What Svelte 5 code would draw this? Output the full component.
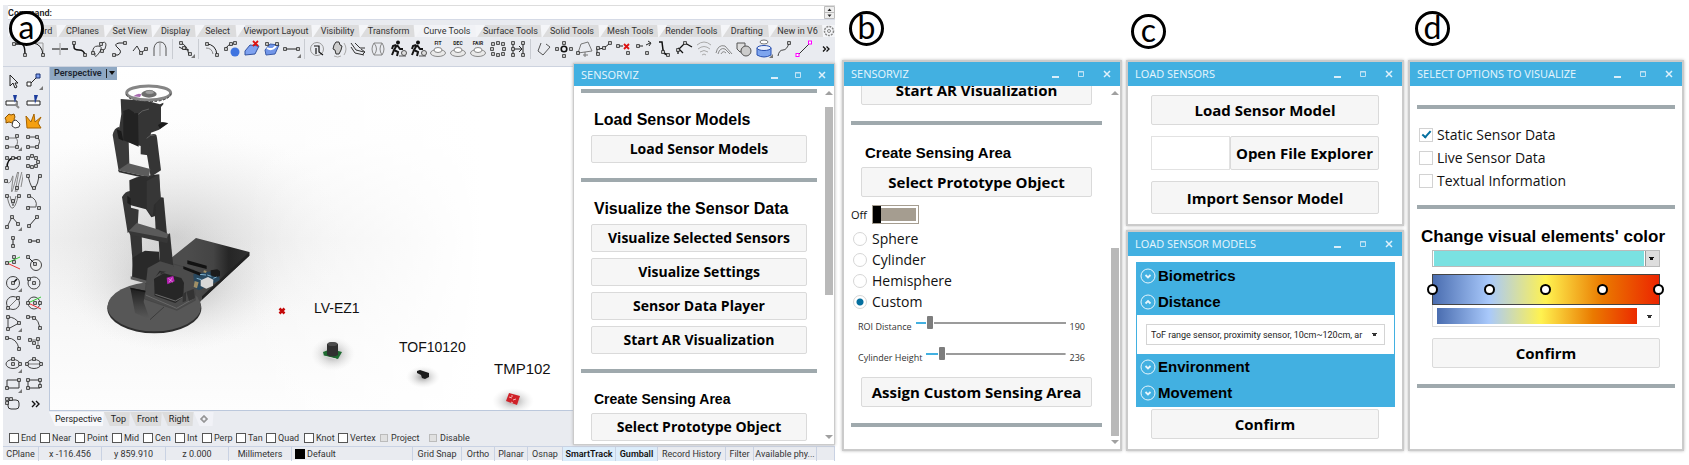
<script lang="ts">
  const sq = (x: number, y: number) =>
    `<rect x="${x - 1.3}" y="${y - 1.3}" width="2.6" height="2.6" fill="#fff" stroke="#222" stroke-width=".9"/>`;
  const ln = (d: string, c = '#222', w = 1) =>
    `<path d="${d}" fill="none" stroke="${c}" stroke-width="${w}"/>`;
  const fl = (d: string, c: string, s = 'none') => `<path d="${d}" fill="${c}" stroke="${s}"/>`;
  const corner = fl('M19 15v4h-4z', '#777');
  const rings = (t: string) =>
    `<text x="10" y="6" font-family="Roboto, sans-serif" font-size="5" font-weight="700" text-anchor="middle" fill="#222">${t}</text>` +
    '<ellipse cx="10" cy="14" rx="7.500" ry="3.500" fill="#e8e8e8" stroke="#888"/><ellipse cx="10" cy="11" rx="4" ry="2.500" fill="#fff" stroke="#888"/>';
  const runner =
    '<circle cx="10" cy="3.500" r="2" fill="#111"/>' +
    ln('M9 6l-3 5 4 2-1 4M6 11l-2 5M9 6l3 4 3 0M8 6L5 7 4 10', '#151515', 2) +
    '<circle cx="16" cy="14" r="2.500" fill="#ddd" stroke="#555"/>' + ln('M11 17h7', '#555');

  const tabs: [string, number][] = [
    ['Standard', 49], ['CPlanes', 47], ['Set View', 47], ['Display', 43], ['Select', 40],
    ['Viewport Layout', 77], ['Visibility', 47], ['Transform', 55], ['Curve Tools', 62],
    ['Surface Tools', 66], ['Solid Tools', 58], ['Mesh Tools', 59], ['Render Tools', 64],
    ['Drafting', 47], ['New in V6', 54]
  ];

  const toolGroups: string[][] = [
    [
      ln('M3 5h8q4 0 4 10', '#111', 1.5) + sq(4, 5) + sq(15, 16),
      ln('M3 4h10v12', '#999') + ln('M3 4q9 1 10 12', '#222') + sq(13, 16),
      ln('M2 10h8', '#111') + ln('M10 4v12', '#999') + ln('M11 10h7', '#111', 1.4),
      ln('M4 4v4q0 3 5 3t6 5', '#111', 1.5) + sq(4, 4) + sq(15, 16),
      ln('M3 14q-1-7 5-7t1 7-4 0M10 5q6-4 6 1t-4 6', '#444') + sq(3, 14) + sq(11, 5) + sq(12, 12),
      ln('M16 4H9q-6 1-1 5t0 7H3', '#222') + sq(15, 4) + sq(4, 16),
      ln('M3 12l4-5 4 7 5-4', '#333') + sq(11, 14) + sq(16, 10),
      ln('M4 17V9q1-6 6-6t6 6v8', '#555') + ln('M10 3v14', '#999')
    ],
    [ln('M4 4q7 1 9 12M3 8q4 3 10 3', '#222') + sq(5, 4) + sq(8, 9) + sq(14, 15) + corner],
    [
      ln('M4 5q10 0 11 11', '#222') + ln('M4 9q6 0 7 6', '#888') + sq(5, 5) + sq(15, 16),
      '<circle cx="13" cy="13" r="4.500" fill="#3f74e0"/>' + ln('M3 10q3-5 8-5', '#222') + sq(4, 10) + sq(9, 5) + sq(13, 4),
      fl('M3 12l5-6 9 1-4 8-10 1z', '#7fa2f0', '#33539f') + ln('M11 2l5 5M16 2l-5 5', '#d11', 1.8),
      fl('M3 11l5-6 9 1-4 9-9 1z', '#7296e8', '#3a5ba8') + ln('M5 9q5 3 9-2', '#fff', 2) + sq(5, 5) + sq(15, 5),
      ln('M3 10h14', '#222') + sq(3, 10) + sq(16, 10) + corner
    ],
    [
      '<circle cx="9" cy="10" r="6.500" fill="none" stroke="#999"/>' + ln('M6 7h5v6l4 3M8 9v6', '#111', 1.2),
      fl('M8 3h3l1 3 2 1-1 4-2 4H8l-1-4-2-1 1-4z', '#ccc', '#333') + ln('M16 4q4 6 0 12M6 17q4 2 7 0', '#aaa'),
      ln('M3 4l5 7 8 2M3 8l4 6 9 2M7 4l5 5 5 0M13 10l4 3-3 3', '#333'),
      ln('M6 4q-4 6 0 12 5-6 0-12M14 4q-4 6 0 12 4-6 0-12M6 4h8M6 16h8', '#888'),
      runner,
      runner,
      rings('FIT'),
      rings('DEC'),
      rings('FAIR'),
      sq(5, 5) + sq(10, 4) + sq(15, 5) + sq(4, 10) + sq(16, 10) + sq(5, 15) + sq(10, 16) + sq(15, 15),
      ln('M5 4v12M15 4v12M6 10h8M11 7l3 3-3 3', '#222') + sq(5, 4) + sq(5, 10) + sq(5, 16) + sq(15, 4) + sq(15, 16)
    ],
    [
      ln('M7 4l-3 8 5 4 7-8-4-3', '#555'),
      '<circle cx="10" cy="10" r="2.800" fill="none" stroke="#111" stroke-width="1.600"/>' + sq(3, 10) + sq(17, 10) + sq(10, 4) + sq(10, 17),
      ln('M7 5l7-2 4 9-14 2zM11 13v5M9 16h5', '#777') + sq(4, 14),
      ln('M3 15V9q5 3 13-5', '#222') + sq(4, 9) + sq(10, 9) + sq(4, 15) + sq(16, 4),
      ln('M4 7h5', '#222') + sq(4, 7) + sq(14, 14) + ln('M10 5l5 5M15 5l-5 5', '#d11', 1.8),
      ln('M4 7h5M12 6l4-2M14 2l3 2-2 3', '#222') + sq(4, 7) + sq(13, 14),
      ln('M5 3l3 0 1 8q1 5 6 5', '#111', 1.5) + sq(9, 13) + sq(14, 16),
      ln('M4 15V11L11 4l7 4M4 9l5 5', '#111', 1.3) + sq(4, 11) + sq(11, 4),
      ln('M3 6q7-6 14 0M4 10q6-5 12 0M6 13q4-3 8 0M8 16q2-2 4 0', '#aaa'),
      ln('M2 14q2-9 9-7l7 8M4 15q2-7 7-5l5 5M7 15q2-4 5-1', '#888'),
      fl('M3 4h8v4h-1a5 5 0 0 0-3 5H6L3 10z', '#ddd', '#555') + '<circle cx="12" cy="12" r="5" fill="#ccc" stroke="#555"/>',
      '<ellipse cx="10" cy="3" rx="4" ry="2" fill="#fff" stroke="#777"/><path d="M3 9v7q7 4 14 0V9z" fill="#7ea5ee" stroke="#2850b0"/><ellipse cx="10" cy="9" rx="7" ry="2.500" fill="#e8eefc" stroke="#2850b0"/>' + corner,
      ln('M4 17q1-6 5-6t6-7', '#444') + sq(15, 4),
      ln('M4 16L16 4', '#333') + '<rect x="2" y="14.500" width="3" height="3" fill="#fff" stroke="#f0f"/><rect x="14.500" y="2" width="3" height="3" fill="#fff" stroke="#f0f"/>'
    ]
  ];

  const sideTools: string[] = [
    ln('M7 4v11l3-3 2 5 2-1-2-4h3z', '#222'),
    ln('M7 12l6-6', '#222') + fl('M3 11h4v4H3z', '#fff', '#222') + fl('M12 3h4v4h-4z', '#7f9ff0', '#1b3070') + corner,
    fl('M3 10h11v4H3z', '#fff', '#222') + fl('M10 4h4l-2 8z', '#1c3c9c') + ln('M12 13l4 4', '#888', 2),
    fl('M3 10h13v4H3z', '#fff', '#222') + fl('M10 4h4l-3 9z', '#1c3c9c'),
    fl('M3 6l3-3 2 1 3-1 1 3-1 2 1 2-3 2-3-1-3 1 0-3-1-2z', '#f5a623', '#8a5200') + fl('M10 10l3-1 2 2 2 2-1 3-4 1-3-2z', '#fff', '#444'),
    fl('M3 17L2 5l5 6 3-8 1 8 6-5-3 6 3 5z', '#f5a010', '#a86400'),
    ln('M4 6h9q3 3 0 9H4', '#777') + sq(4, 6) + sq(14, 4) + sq(4, 15) + sq(14, 15) + corner,
    ln('M4 5h9q5 4 0 10H4', '#444') + sq(4, 5) + sq(13, 5) + sq(4, 15) + sq(13, 15),
    ln('M4 16q0-9 6-10h6', '#111', 1.5) + sq(4, 6) + sq(10, 6) + sq(16, 6) + sq(4, 16),
    sq(4, 6) + sq(8, 4) + sq(12, 6) + sq(14, 10) + sq(12, 14) + sq(8, 15) + sq(4, 14),
    ln('M4 10q3 3 5-4t0 8 4-8 0 9 4-8 1 8', '#888') + sq(3, 9) + sq(14, 16),
    ln('M4 4q4 16 7 12t4-12', '#444') + sq(4, 4) + sq(16, 4) + sq(10, 16),
    ln('M4 4q3 14 6 12t5-12M7 4q2 8 3 10 1-3 3-10', '#777') + sq(4, 4) + sq(16, 4) + sq(10, 9),
    ln('M5 4q9 3 7 11H4', '#555') + sq(5, 4) + sq(4, 16) + sq(15, 16),
    ln('M4 15l5-10 7 8', '#444') + sq(4, 15) + sq(9, 5) + sq(15, 12) + corner,
    ln('M5 14l7-8', '#333') + sq(5, 14) + sq(13, 5),
    ln('M10 6v8', '#222') + sq(10, 6) + sq(10, 14),
    ln('M6 9h8', '#222') + sq(6, 9) + sq(14, 9),
    ln('M4 10l13-6', '#3c3') + ln('M4 10l13 6', '#e33') + sq(4, 10) + sq(11, 9) + sq(11, 4),
    '<circle cx="12" cy="12" r="5.500" fill="#eee" stroke="#444"/>' + ln('M4 4l7 7') + sq(4, 4) + sq(11, 11),
    '<circle cx="10" cy="10" r="6.500" fill="none" stroke="#444"/>' + ln('M10 10l4-4', '#111', 1.6) + sq(10, 10) + corner,
    '<circle cx="10" cy="10" r="6" fill="none" stroke="#444"/>' + sq(10, 10) + sq(5, 6),
    '<circle cx="10" cy="10" r="6.500" fill="none" stroke="#444"/>' + ln('M5 15l10-10', '#777') + sq(5, 15) + sq(15, 5),
    '<circle cx="10" cy="10" r="6" fill="none" stroke="#444"/>' + ln('M4 10l13-6', '#3c3') + ln('M4 10l13 6', '#e33') + sq(4, 10) + sq(11, 10) + sq(16, 10),
    ln('M5 4v12l11-6q-4-6-11-6', '#444') + sq(5, 4) + sq(5, 16) + sq(16, 10) + corner,
    ln('M4 4h6q5 4 6 11', '#444') + sq(4, 4) + sq(10, 5) + sq(16, 15),
    ln('M4 5q10 0 12 11', '#444') + sq(4, 5) + sq(16, 5) + sq(16, 16),
    ln('M6 7h8v8', '#777') + sq(6, 7) + sq(10, 10) + sq(14, 6) + sq(14, 14),
    '<ellipse cx="10" cy="10" rx="7" ry="4.500" fill="none" stroke="#444"/>' + sq(10, 10) + sq(17, 10) + sq(10, 5) + corner,
    '<ellipse cx="10" cy="10" rx="7" ry="4.500" fill="none" stroke="#444"/>' + ln('M3 10h14', '#777') + sq(3, 10) + sq(17, 10) + sq(10, 5),
    ln('M4 6h12v8H4z', '#333') + sq(4, 14) + sq(16, 6) + corner,
    ln('M4 6h12v8H4z', '#333') + sq(4, 6) + sq(4, 14) + sq(16, 6) + sq(16, 12),
    '<rect x="5" y="6" width="11" height="9" rx="3" fill="none" stroke="#333"/>' + sq(4, 5) + sq(8, 5) + sq(4, 9),
    ln('M8 7l3 3-3 3M12 7l3 3-3 3', '#111', 1.4)
  ];

  const viewTabs = ['Perspective', 'Top', 'Front', 'Right'];
  const snaps = ['End', 'Near', 'Point', 'Mid', 'Cen', 'Int', 'Perp', 'Tan', 'Quad', 'Knot', 'Vertex', 'Project', 'Disable'];
  const status = ['CPlane', 'x -116.456', 'y 859.910', 'z 0.000', 'Millimeters', 'Default', 'Grid Snap', 'Ortho', 'Planar', 'Osnap', 'SmartTrack', 'Gumball', 'Record History', 'Filter', 'Available phy...', ''];

  const shapes = ['Sphere', 'Cylinder', 'Hemisphere', 'Custom'];
  let shape = $state('Custom');
  let sliders = $state([
    { id: 'roi', label: 'ROI Distance', value: 190, max: 2400 },
    { id: 'height', label: 'Cylinder Height', value: 236, max: 2400 }
  ]);
  let options = $state([
    { label: 'Static Sensor Data', on: true },
    { label: 'Live Sensor Data', on: false },
    { label: 'Textual Information', on: false }
  ]);
  const stops = [0, 25, 50, 75, 100];
</script>

{#snippet titlebar(title: string)}
  <header class="titlebar">
    <h2>{title}</h2>
    <button aria-label="Minimize"><svg width="10" height="10"><path d="M2 8h7" stroke="#d9eefa" stroke-width="2" /></svg></button>
    <button aria-label="Maximize"><svg width="10" height="10"><path d="M2.500 2.500h5v5h-5zM2 3h6" fill="none" stroke="#bfe2f5" /></svg></button>
    <button aria-label="Close"><svg width="10" height="10"><path d="M2 2l6 6M8 2L2 8" stroke="#dff1fb" stroke-width="1.500" /></svg></button>
  </header>
{/snippet}

{#snippet scroller()}
  <div class="scroller">
    <svg width="8" height="5"><path d="M0 5l4-4 4 4z" fill="#a0a0a0" /></svg>
    <div class="rail"><span></span></div>
    <svg width="8" height="5"><path d="M0 0l4 4 4-4z" fill="#a0a0a0" /></svg>
  </div>
{/snippet}

{#snippet chevron(up: boolean)}
  <svg width="16" height="16" viewBox="0 0 16 16" fill="none" stroke="#e6f5fc">
    <circle cx="8" cy="8" r="7" />
    <path d={up ? 'M5.500 9.500L8 7l2.500 2.500' : 'M5.500 7L8 9.500 10.500 7'} stroke-width="1.800" />
  </svg>
{/snippet}

<main>
  <section class="rhino">
    <span class="badge over">a</span>
    <div class="command">
      <label for="cmd">Command:</label><input id="cmd" />
      <svg width="11" height="13"><path d="M.5.500h10v12H.5zM0 6.500h11" fill="#eee" stroke="#bbb" /><path d="M3.500 5l2-2.500 2 2.500zM3.500 8.500l2 2.500 2-2.500z" fill="#222" /></svg>
    </div>
    <nav class="tabs">
      {#each tabs as [name, w]}
        <button class:active={name === 'Curve Tools'} style:flex-grow={w}>{name}</button>
      {/each}
      <svg width="12" height="12" fill="none" stroke="#888"><circle cx="6" cy="6" r="4.500" stroke-dasharray="2 1" stroke-width="1.500" /><circle cx="6" cy="6" r="1.500" /></svg>
    </nav>
    <div class="toolbar">
      {#each toolGroups as group}
        <div class="group">
          {#each group as icon}<svg width="20" height="20" viewBox="0 0 20 20">{@html icon}</svg>{/each}
        </div>
      {/each}
      <svg class="more" width="10" height="8" fill="none" stroke="#111" stroke-width="1.300"><path d="M1 1.500l2.500 2.500-2.500 2.500M4.500 1.500l2.500 2.500-2.500 2.500" /></svg>
    </div>
    <div class="work">
      <div class="side">
        {#each sideTools as icon}<svg width="20" height="20" viewBox="0 0 20 20">{@html icon}</svg>{/each}
      </div>
      <div class="viewport">
        <button class="viewname"><span>Perspective</span><svg width="6" height="5"><path d="M0 0h6L3 4z" fill="#111" /></svg></button>
        <svg class="scene" viewBox="50 66 785 344" preserveAspectRatio="xMinYMin slice">
          <defs>
            <linearGradient id="sky" x1="0" y1="0" x2="0" y2="1">
              <stop offset="0" stop-color="#fff" /><stop offset=".22" stop-color="#fdfdfd" />
              <stop offset=".5" stop-color="#f1f1f1" /><stop offset=".8" stop-color="#f9f9f9" /><stop offset="1" stop-color="#fdfdfd" />
            </linearGradient>
            <linearGradient id="fade" x1="0" x2="1"><stop offset=".25" stop-color="#fff" stop-opacity="0" /><stop offset=".55" stop-color="#fff" /></linearGradient>
            <radialGradient id="shade"><stop offset="0" stop-color="#777" stop-opacity=".75" /><stop offset=".5" stop-color="#aaa" stop-opacity=".35" /><stop offset="1" stop-color="#ddd" stop-opacity="0" /></radialGradient>
            <linearGradient id="plate" x1="0" x2="1"><stop offset=".4" stop-color="#4c4c4c" /><stop offset=".65" stop-color="#444" /><stop offset=".8" stop-color="#262626" /><stop offset="1" stop-color="#303030" /></linearGradient>
            <linearGradient id="post" x1="0" x2="0" y1="0" y2="1"><stop offset="0" stop-color="#1d1d1d" /><stop offset=".6" stop-color="#444" /><stop offset="1" stop-color="#5a5a5a" /></linearGradient>
          </defs>
          <rect x="50" y="66" width="785" height="344" fill="url(#sky)" />
          <ellipse cx="175" cy="235" rx="170" ry="115" fill="url(#shade)" opacity=".35" />
          <ellipse cx="175" cy="285" rx="105" ry="66" fill="url(#shade)" opacity=".6" />
          <rect x="50" y="66" width="785" height="344" fill="url(#fade)" />
          <g transform="translate(0 60) scale(.33333)">
            <path d="M588 531L748 573V584L606 716 590 735 460 720 440 650z" fill="url(#plate)" />
            <path d="M748 573V584L606 716V706z" fill="#222" />
            <ellipse cx="463" cy="742" rx="141" ry="75" fill="#2e2e2e" />
            <ellipse cx="463" cy="737" rx="140" ry="74" fill="#575757" />
            <path d="M444 612l36-14 102 28 4 92-55 30-98-34z" fill="#4b4b4b" stroke="#383838" />
            <path d="M437 702l93 40 55-32" fill="none" stroke="#777" stroke-width="2" />
            <path d="M580 640l75-12 4 30-62 30-14-8z" fill="#28485f" />
            <path d="M562 598l58 16v10l-58-15zM550 616l54 20-4 8-50-20z" fill="#121212" />
            <path d="M632 628l20-3 8 6v14l-12 4-16-6z" fill="#1b1b1b" />
            <path d="M602 658l22-10 16 8-1 18-20 9-17-8z" fill="#d8d8d8" />
            <path d="M584 660l12 4-5 18-10-4zM612 628l8 2-2 6-8-2z" fill="#a08f66" />
            <path d="M600 640l18 2M622 642l12 4M590 652l14 4M640 652l10-4" stroke="#7fb2d0" stroke-width="3" />
            <path d="M462 653l30-16 52 14 8 14-2 43-24 18-62-22z" fill="#262626" />
            <path d="M466 700l60 20 24-13" fill="none" stroke="#6b6b6b" stroke-width="3" />
            <path d="M559 692l22-8 4 28-18 8zM548 700l10-8v28l-10 4z" fill="#333" />
            <path d="M500 650l20-5 4 16-22 9z" fill="#b81fb4" /><path d="M505 652l14 12M517 650l-10 14" stroke="#e7b8e4" stroke-width="2" />
            <path d="M391 680l45 9-5 34 19 53-45-20z" fill="url(#post)" /><path d="M391 680l45 9v5l-44-9z" fill="#151515" />
            <path d="M450 776l42-38" stroke="#3b3b3b" stroke-width="3" />
            <path d="M390 516l35 3 2 65-27 40z" fill="#353535" /><path d="M476 533l34-16 10 100-38 24z" fill="#303030" />
            <path d="M398 590l22-13 15-8 42 3 6 60-43 36-44-16z" fill="#292929" />
            <path d="M392 646l52 14 4 10-56-15z" fill="#5b5b5b" /><path d="M438 667l5-46 37-20 40 12-1 22-40-6-30 44z" fill="#4a4a4a" />
            <path d="M366 408q10-18 24-18l3 50 23 6-3 48-30 22z" fill="#363636" />
            <path d="M463 430q12-26 28-20l10 110-4 18-30-30z" fill="#303030" />
            <path d="M386 510l24-24 62 19 34 14-5 18-112-20z" fill="#5a5a5a" /><path d="M386 510l115 22 4-14v16l-3 13-112-26z" fill="#373737" />
            <path d="M388 358l22-9 66-9 6 72-15 18-1 35-12 4-16-24-48-13z" fill="#2d2d2d" />
            <path d="M440 360l38-20 4 72-20 20-4 34-18-20z" fill="#373737" /><path d="M382 404l10 8v20l-10-6z" fill="#1d1d1d" />
            <path d="M338 222q4-22 20-25l12 33 16 10 2 68-32 22z" fill="#3b3b3b" />
            <path d="M434 244q14-30 32-24 4 1 5 10l12 98-31 20-10-60z" fill="#353535" />
            <path d="M354 328l31-21 66 17-4 24z" fill="#5c5c5c" /><path d="M354 328l93 20v6l-90-20z" fill="#303030" />
            <path d="M362 114l80 6 38 10 10-5v5l-7 8v45l22 4-28 19-24 9-9 68-22-3v-25l-58-18-6-38 6-40z" fill="#353535" />
            <path d="M370 160l44-4 2 101-46-20zM370 150l16-6 16 10v10l-30 4z" fill="#222" />
            <path d="M474 192l14-8 16 2-24 17z" fill="#1a1a1a" />
            <path d="M350 205l14 6 6 28-14-6z" fill="#1b1b1b" />
            <path d="M415 160l12-10 20-6M440 232q10-12 24-10" fill="none" stroke="#777" stroke-width="2" />
            <ellipse cx="446" cy="96" rx="66" ry="21" fill="none" stroke="#858585" stroke-width="9" />
            <path d="M379 100q8 22 67 22t67-24" fill="none" stroke="#3d3d3d" stroke-width="3" stroke-dasharray="8 5" />
            <ellipse cx="447" cy="99" rx="23" ry="11" fill="#6e6e6e" /><ellipse cx="449" cy="94" rx="13" ry="6" fill="#a0a0a0" stroke="#555" />
            <path d="M400 106q14-12 24-6l-4 8z" fill="#a86bb0" />
          </g>
          <path d="M279.500 307.500l5 5M284.500 307.500l-5 5" stroke="#c40808" stroke-width="2.500" />
          <ellipse cx="333" cy="353" rx="22" ry="17" fill="url(#shade)" /><ellipse cx="423" cy="376" rx="17" ry="11" fill="url(#shade)" /><ellipse cx="513" cy="400" rx="21" ry="13" fill="url(#shade)" />
          <path d="M323 351l8-3 11 3-4 7-14-3z" fill="#1e6a30" /><path d="M324 355l12 3" stroke="#ddd" />
          <path d="M327 343q5-4 11 0v11q-6 3-11 0z" fill="#303030" /><ellipse cx="332.500" cy="343" rx="5" ry="2" fill="#4c4c4c" />
          <path d="M417 370l3-1 9 3 0 4-4 2-3-1-1-3-4-2z" fill="#1c1c1c" />
          <path d="M509 392l11 3-3 9-11-4z" fill="#cf2027" /><path d="M509 396l3 1M513 399l3-1M511 401l2 1M512 394v2" stroke="#f3b5b5" />
          <g font-family="Liberation Sans, Arial, sans-serif" fill="#111">
            <text x="314" y="312" font-size="14">LV-EZ1</text>
            <text x="399" y="351" font-size="14">TOF10120</text>
            <text x="494" y="373" font-size="15">TMP102</text>
          </g>
        </svg>
      </div>
    </div>
    <nav class="viewtabs">
      {#each viewTabs as name, i}<button class:active={i === 0}>{name}</button>{/each}
      <button class="add" aria-label="Add view"><svg width="8" height="8" fill="none" stroke="#777"><path d="M3 1h2v2h2v2H5v2H3V5H1V3h2z" /></svg></button>
    </nav>
    <div class="snaps">
      {#each snaps as name, i}<label class:dim={i > 10}><input type="checkbox" />{name}</label>{/each}
    </div>
    <footer class="status">
      {#each status as text}
        <span class:on={text === 'SmartTrack' || text === 'Gumball'} class:layer={text === 'Default'}>{text}</span>
      {/each}
    </footer>

    <article class="window floating">
      {@render titlebar('SENSORVIZ')}
      <div class="scrollable">
        <div class="content first">
          <hr />
          <h3>Load Sensor Models</h3>
          <button class="action">Load Sensor Models</button>
          <hr />
          <h3>Visualize the Sensor Data</h3>
          <button class="action">Visualize Selected Sensors</button>
          <button class="action">Visualize Settings</button>
          <button class="action">Sensor Data Player</button>
          <button class="action">Start AR Visualization</button>
          <hr />
          <h3 class="small">Create Sensing Area</h3>
          <button class="action">Select Prototype Object</button>
        </div>
        {@render scroller()}
      </div>
    </article>
  </section>

  <section class="column">
    <span class="badge">b</span>
    <article class="window tall">
      {@render titlebar('SENSORVIZ')}
      <div class="scrollable">
        <div class="content second">
          <button class="action">Start AR Visualization</button>
          <hr />
          <h3>Create Sensing Area</h3>
          <button class="action">Select Prototype Object</button>
          <label class="toggle">Off<input type="checkbox" /></label>
          <div class="radios">
            {#each shapes as s}
              <label><input type="radio" name="shape" value={s} bind:group={shape} />{s}</label>
            {/each}
          </div>
          <div class="sliders">
            {#each sliders as s}
              <div class="slider">
                <label for={s.id}>{s.label}</label>
                <input id={s.id} type="range" min="0" max={s.max} bind:value={s.value} style:--fill="{(s.value / s.max) * 100}%" />
                <output for={s.id}>{s.value}</output>
              </div>
            {/each}
          </div>
          <button class="action">Assign Custom Sensing Area</button>
          <hr />
        </div>
        {@render scroller()}
      </div>
    </article>
  </section>

  <section class="column">
    <span class="badge low">c</span>
    <article class="window loader">
      {@render titlebar('LOAD SENSORS')}
      <div class="stack">
        <button class="action">Load Sensor Model</button>
        <div class="file"><input aria-label="File" /><button class="action">Open File Explorer</button></div>
        <button class="action">Import Sensor Model</button>
      </div>
    </article>
    <article class="window models">
      {@render titlebar('LOAD SENSOR MODELS')}
      <div class="accordion">
        <button>{@render chevron(false)}Biometrics</button>
        <button>{@render chevron(true)}Distance</button>
        <div class="pane">
          <select aria-label="Distance"><option>ToF range sensor, proximity sensor, 10cm~120cm, ar</option></select>
        </div>
        <button>{@render chevron(false)}Environment</button>
        <button>{@render chevron(false)}Movement</button>
      </div>
      <button class="action confirm">Confirm</button>
    </article>
  </section>

  <section class="column">
    <span class="badge">d</span>
    <article class="window tall">
      {@render titlebar('SELECT OPTIONS TO VISUALIZE')}
      <div class="options">
        <hr />
        <div class="checks">
          {#each options as o}
            <label><input type="checkbox" bind:checked={o.on} />{o.label}</label>
          {/each}
        </div>
        <hr />
        <h3>Change visual elements' color</h3>
        <div class="colors">
          <div class="swatch"><select aria-label="Color"><option value="#7ae1e1"></option></select></div>
          <div class="gradient">
            {#each stops as s}<i style:left="{s}%"></i>{/each}
          </div>
          <div class="preset"><select aria-label="Gradient"><option value="heat"></option></select></div>
          <button class="action">Confirm</button>
        </div>
        <hr />
      </div>
    </article>
  </section>
</main>

<style>
  :global(body) { margin: 0; background: #fff; }
  * { box-sizing: border-box; }
  button, input, select { font: inherit; margin: 0; padding: 0; border: 0; border-radius: 0; color: inherit; background: none; }
  h2, h3 { margin: 0; }
  svg { display: block; flex: none; }
  main {
    display: grid;
    grid-template-columns: minmax(0, 835fr) minmax(0, 280fr) minmax(0, 278fr) minmax(0, 276fr);
    gap: 4px;
    padding: 5px 5px 6px 3px;
    font-family: "Open Sans", "Noto Sans", sans-serif;
    color: #111;
  }
  .column { display: flex; flex-direction: column; gap: 4px; }
  .badge {
    width: 35px; height: 35px; margin: 6px 0 10px 7px; flex: none;
    border: 3px solid #000; border-radius: 50%;
    display: flex; align-items: center; justify-content: center;
    font: 32px/28px Lato, sans-serif; color: #000; padding-bottom: 4px;
  }
  .low { margin-top: 9px; margin-bottom: 7px; margin-left: 5px; }
  .over { position: absolute; left: 6px; top: 6px; margin: 0; background: #fff; z-index: 2; }

  .rhino { position: relative; margin-right: 3px; align-self: start; background: #e9ebf0; font: 9px/12px Roboto, "Noto Sans", sans-serif; color: #333; }
  .command { display: flex; align-items: center; height: 15px; margin-left: 5px; background: #fff; border-top: 1px solid #ddd; border-bottom: 1px solid #d5dae6; font-weight: 600; color: #222; }
  .command input { flex: 1; min-width: 0; }
  .tabs { display: flex; margin: 5px 0 0 5px; height: 12px; align-items: center; background: #f4f5f8; }
  .tabs button { flex: 1 1 0; height: 12px; line-height: 12px; background: #dcdcdd; clip-path: polygon(9px 0, calc(100% - 1px) 0, 100% 100%, 1px 100%); padding-left: 3px; white-space: nowrap; }
  .tabs .active { background: #f1f2f6; }
  .toolbar { display: flex; align-items: center; height: 24px; margin: 0 3px 5px 7px; overflow: hidden; }
  .group { display: flex; }
  .group + .group { border-left: 1px solid #c9ccd2; margin-left: 2px; padding-left: 3px; }
  .more { margin-left: auto; }
  .work { display: flex; border-top: 1px solid #cdd3df; }
  .side { width: 46px; padding: 4px 2px 0 0; margin-bottom: -3px; flex: none; display: grid; grid-template-columns: 21px 21px; grid-auto-rows: 1fr; align-items: center; }
  .viewport { position: relative; flex: 1; min-width: 0; height: 344px; border-left: 1px solid #bcc8dc; border-bottom: 1px solid #bcc8dc; background: #fff; overflow: hidden; }
  .scene { width: 100%; height: 100%; }
  .viewname { position: absolute; left: 0; top: 0; height: 13px; display: flex; align-items: center; background: #8fa8c3; font-weight: 600; color: #1b2430; }
  .viewname span { padding: 0 4px 0 4px; border-right: 1px solid #222; line-height: 9px; }
  .viewname svg { margin: 0 2px; }
  .viewtabs { display: flex; margin: 1px 0 0 46px; height: 14px; }
  .viewtabs button { padding: 0 4px 0 7px; background: #dcdcdc; clip-path: polygon(0 0, 100% 0, calc(100% - 1px) 100%, 6px 100%); color: #222; }
  .viewtabs .active { background: #f7f8fb; padding: 0 2px 0 6px; }
  .viewtabs .add { background: #f1f2f7; padding: 0 6px; }
  .snaps { display: grid; grid-template-columns: 31px 35px 37px 31px 32px 27px 34px 30px 38px 34px 42px 49px 50px; margin: 4px 0 1px 6px; height: 15px; align-items: center; }
  .snaps label { display: flex; align-items: center; gap: 2px; }
  .snaps input { appearance: none; width: 10px; height: 10px; border: 1px solid #555; background: #fff; flex: none; }
  .snaps .dim input { width: 8px; height: 8px; border-color: #bbb; background: #e0e0e0; margin-right: 1px; }
  .status { display: grid; grid-template-columns: 36fr 63fr 64fr 63fr 63fr 121fr 49fr 33fr 33fr 35fr 53fr 42fr 68fr 28fr 63fr 18fr; border-top: 1px solid #c9d2e3; height: 14px; line-height: 14px; }
  .status span { border-right: 1px solid #c9d2e3; text-align: center; white-space: nowrap; min-width: 0; }
  .status .on { background: #dcedfb; color: #111; font-weight: 600; }
  .status .layer { display: flex; align-items: center; gap: 2px; padding-left: 3px; }
  .layer::before { content: ""; width: 10px; height: 10px; background: #000; }

  .window { background: #fff; border: 2px solid #cbcbcb; box-shadow: 0 0 3px #bbb; display: flex; flex-direction: column; }
  .floating { position: absolute; right: 0; top: 58px; width: 262px; height: 382px; border-width: 1px; color: #111; }
  .tall { height: 391px; }
  .loader { height: 166px; }
  .models { height: 221px; }
  .titlebar { display: flex; align-items: center; height: 24px; padding: 0 0 0 7px; background: #42b0e1; color: #e8f6fd; flex: none; }
  .floating .titlebar { height: 22px; }
  .titlebar h2 { flex: 1; font: 400 11px/20px "Open Sans", "Noto Sans", sans-serif; white-space: nowrap; }
  .titlebar button { width: 26px; display: flex; justify-content: center; }
  .floating .titlebar button { width: 24px; }
  .scrollable { flex: 1; min-height: 0; display: flex; overflow: hidden; }
  .scroller { width: 10px; flex: none; display: flex; flex-direction: column; align-items: center; justify-content: space-between; padding: 4px 1px; gap: 12px; }
  .rail { flex: 1; width: 8px; display: flex; flex-direction: column; }
  .rail span { height: 188px; background: #b9b9b9; }
  .tall .rail { justify-content: flex-end; }
  .tall .scroller { gap: 4px; }
  .content { flex: 1; min-width: 0; display: flex; flex-direction: column; }
  hr { border: 0; height: 4px; background: #9fa9ad; width: 100%; margin: 0; flex: none; }
  h3 { font: 700 16px/20px "Liberation Sans", Arial, sans-serif; color: #000; }
  .action { height: 30px; flex: none; border: 1px solid #dadada; border-radius: 2px; background: #f6f6f6; color: #000; font: 660 15px/20px "Open Sans", "Noto Sans", sans-serif; white-space: nowrap; }
  .first { padding: 3px 7px 0 7px; }
  .first hr + h3 { margin: 17px 0 5px 13px; }
  .first .action { height: 28px; margin: 0 10px 6px; font-size: 14px; line-height: 20px; }
  .first .action + hr { margin-top: 9px; }
  .first hr + .small { font-size: 14px; margin: 16px 0 4px 13px; }
  .second { padding: 0 8px 0 7px; margin-top: -11px; }
  .second .action { margin: 0 10px; }
  .second hr { margin-top: 16px; }
  .second h3 { font-size: 15px; margin: 18px 0 4px 14px; }
  .toggle { display: flex; align-items: center; gap: 5px; font-size: 11px; line-height: 19px; margin: 8px 0 4px; }
  .toggle input { appearance: none; width: 47px; height: 19px; border: 1px solid #a59d90; background: linear-gradient(#000, #000) -1px 0 / 10px 100% no-repeat border-box, linear-gradient(#a59d90, #a59d90) content-box; padding: 2px; }
  .radios label { display: flex; align-items: center; gap: 5px; height: 21px; font-size: 14px; padding-left: 2px; }
  .radios input { appearance: none; width: 14px; height: 14px; border: 1px solid #d6d6d6; border-radius: 50%; background: #fff; }
  .radios input:checked { background: radial-gradient(#046f9f 0 3px, #fff 4px); }
  .sliders { display: flex; flex-direction: column; gap: 3px; margin: -1px 17px 7px 7px; }
  .slider { display: flex; align-items: center; height: 28px; gap: 4px; font-size: 9px; line-height: 12px; color: #333; }
  .slider label, .slider output { padding-top: 3px; }
  .slider input { appearance: none; flex: 1; min-width: 0; height: 13px; margin-bottom: 5px; background: linear-gradient(90deg, #42b0e1 var(--fill), #9b9b9b var(--fill)) center / 100% 2px no-repeat; }
  .slider input::-webkit-slider-thumb { appearance: none; width: 6px; height: 13px; border-radius: 1px; background: #7d7d7d; box-shadow: 0 0 0 1px #fff; }

  .stack { display: flex; flex-direction: column; gap: 11px; padding: 9px 23px; }
  .file { display: flex; }
  .file input { width: 79px; min-width: 0; border: 1px solid #e2e2e2; }
  .file .action { flex: 1; height: 34px; }
  .stack > .action:last-child { height: 33px; }
  .accordion { margin: 6px 7px 2px 8px; border: 1px solid #42b0e1; }
  .accordion button { display: flex; align-items: center; gap: 2px; width: 100%; height: 26px; padding-left: 3px; background: #42b0e1; font: 700 15px/20px "Liberation Sans", Arial, sans-serif; color: #000; }
  .pane { padding: 9px; }
  .pane select { appearance: none; display: block; width: 100%; height: 21px; border: 1px solid #d4d4d4; padding: 0 16px 0 4px; font: 9px/12px Roboto, "Noto Sans", sans-serif; color: #222; }
  .pane select, .preset select { background: linear-gradient(#333, #333) right 7px top 8px / 5px 1px no-repeat, linear-gradient(#333, #333) right 8px top 9px / 3px 2px no-repeat; }
  .confirm { margin: 0 23px; }

  .options { display: flex; flex-direction: column; padding: 19px 7px 0; }
  .checks { display: flex; flex-direction: column; padding: 14px 0 13px 2px; }
  .checks label { display: flex; align-items: center; gap: 4px; height: 23px; font-size: 14px; white-space: nowrap; }
  .checks input { appearance: none; width: 14px; height: 14px; border: 1px solid #d2d2d2; background: #fff; }
  .checks input:checked { display: grid; place-items: center; }
  .checks input:checked::after { content: ""; width: 3px; height: 7px; border: solid #046f9f; border-width: 0 2px 2px 0; transform: rotate(42deg); margin-top: -2px; }
  .options h3 { font-size: 17px; margin: 18px 0 3px 4px; white-space: nowrap; }
  .colors { display: flex; flex-direction: column; margin: 0 15px 16px; }
  .swatch { border: 1px solid #bbb; height: 17px; margin-bottom: 7px; }
  .swatch select { appearance: none; display: block; width: 100%; height: 15px; background: linear-gradient(#111, #111) right 5px top 6px / 5px 1px no-repeat, linear-gradient(#111, #111) right 6px top 7px / 3px 2px no-repeat, linear-gradient(90deg, #999 1px, #ddd 1px) right / 14px 100% no-repeat, linear-gradient(#7ae1e1, #7ae1e1) left / calc(100% - 15px) 100% no-repeat; border: solid #fff; border-width: 0 0 0 1px; }
  .gradient { position: relative; height: 31px; border: 1px solid #444; background: linear-gradient(90deg, #4a6db0, #a9c9fb 25%, #fff250 50%, #ea7a00 75%, #ec2500); }
  .gradient i { position: absolute; top: 50%; width: 11px; height: 11px; margin: -6px 0 0 -6px; border: 2px solid #000; border-radius: 50%; background: #fff; }
  .preset { display: flex; align-items: center; height: 22px; border: 1px solid #ddd; border-top: 0; padding-left: 4px; margin-bottom: 11px; }
  .preset::before { content: ""; flex: 1; height: 16px; background: linear-gradient(90deg, #4a6db0, #a9c9fb 26%, #fff250 52%, #ea7a00 78%, #ec2b00); }
  .preset select { appearance: none; width: 22px; height: 18px; }
</style>
